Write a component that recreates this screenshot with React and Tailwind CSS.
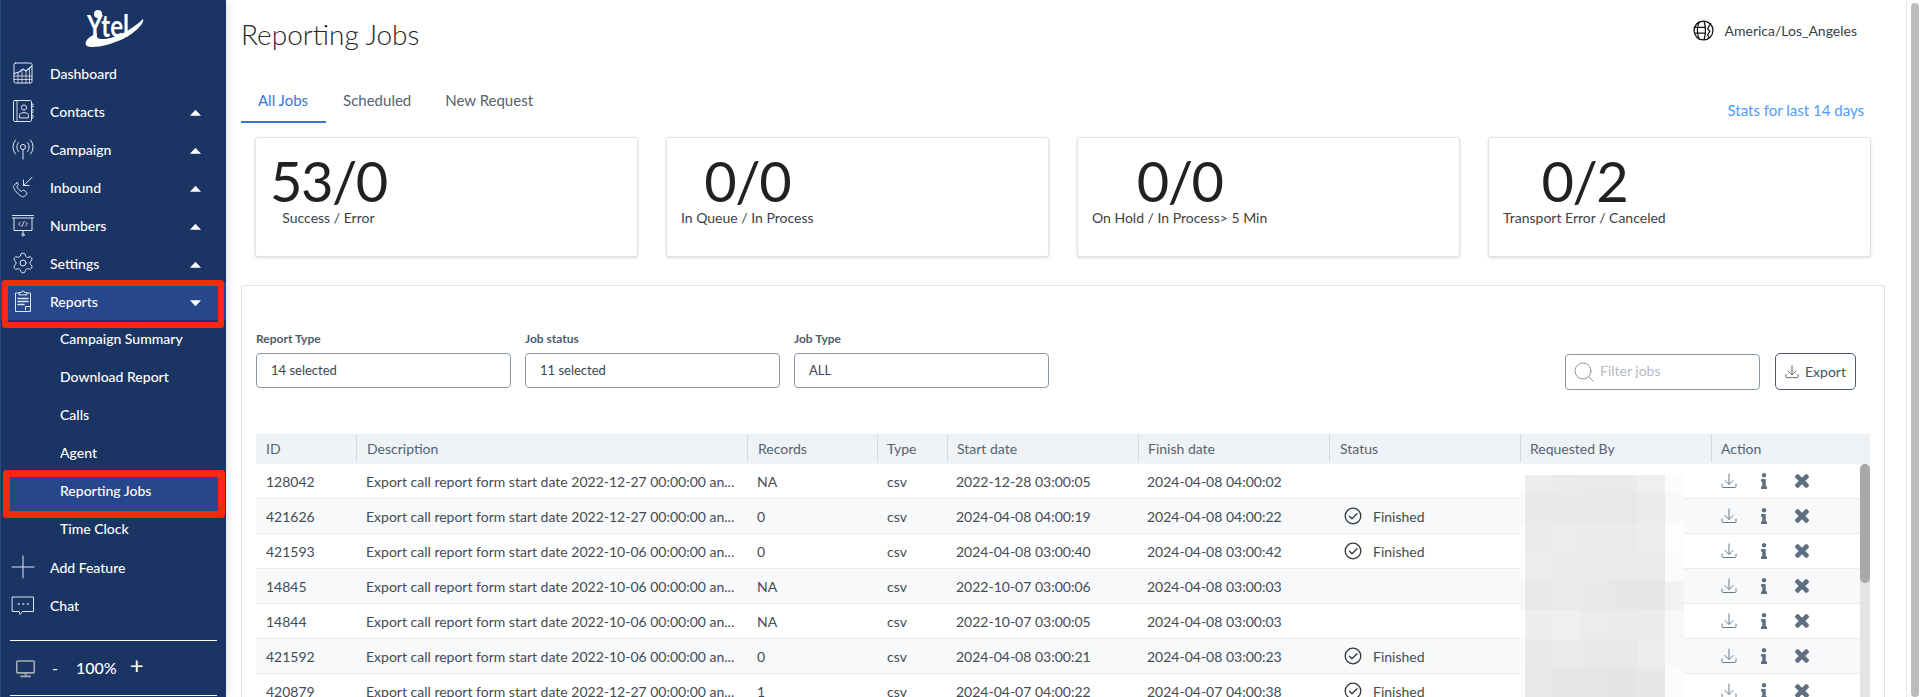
import React from "react";
import { Search, Settings } from "lucide-react";
import { FaInfo, FaTimes } from "react-icons/fa";

const Line = ({ children, className = "" }) => (
  <svg
    viewBox="0 0 24 24"
    fill="none"
    stroke="currentColor"
    strokeWidth="1"
    strokeLinecap="round"
    strokeLinejoin="round"
    className={"w-[24px] h-[24px] text-[#dfe5ee] " + className}
  >
    {children}
  </svg>
);

const DashIcon = () => (
  <Line>
    <rect x="3" y="2" width="18" height="20" rx="1.5" />
    <path d="M3 12.5 8 11l4-3 3 2 6-5" strokeWidth="1.2" />
    <path d="M3 15h18M3 18.5h18M7 11.5V22M11 9v13M15 10v12M18.5 7.5V22" strokeWidth=".8" />
  </Line>
);
const ContactsIcon = () => (
  <Line>
    <rect x="2.5" y="1.5" width="18" height="21" rx="1.2" />
    <path d="M6 1.5v21M20.5 5h1.5v3h-1.5M20.5 10.5H22v3h-1.5M20.5 16H22v3h-1.5" strokeWidth=".9" />
    <circle cx="13" cy="8.5" r="2.6" />
    <path d="M8.5 18.5v-2.2c0-1.5 1.6-2.6 4.5-2.6s4.500 1.100 4.500 2.600v2.200z" />
  </Line>
);
const CampaignIcon = () => (
  <Line>
    <circle cx="12" cy="10" r="2.6" />
    <path d="M12 12.600V22" />
    <path d="M7.500 5.500a6.500 6.500 0 0 0 0 9M16.500 5.500a6.500 6.500 0 0 1 0 9M4.500 3a10.500 10.500 0 0 0 0 14M19.500 3a10.500 10.500 0 0 1 0 14" />
  </Line>
);
const InboundIcon = () => (
  <Line>
    <path d="M5.500 8 3 10.500c-.8.800-.7 1.800-.2 2.700 2 3.600 4.500 6.200 8 8.300.9.500 2 .5 2.700-.2l2.200-2.200c.4-.4.400-1 0-1.400l-2.600-2.400c-.4-.4-1-.4-1.400 0l-1.200 1.200c-2.200-1.200-3.600-2.800-4.800-5l1.300-1.200c.4-.4.400-1 0-1.400L7 8c-.4-.4-1-.4-1.500 0z" />
    <path d="M21 2.500 12.500 10.500M12.500 5v5.500H18" />
  </Line>
);
const NumbersIcon = () => (
  <Line>
    <path d="M1.500 2.500h21M1.500 5h21M3 5v12.500h18V5M12 17.500v3" />
    <circle cx="12" cy="21.800" r="1.200" />
    <path d="m9.500 9-2 2 2 2M14.500 9l2 2-2 2M13 8.500l-2 5" strokeWidth=".9" />
  </Line>
);
const ReportsIcon = () => (
  <Line>
    <path d="M8 4H4.500v18.500h15V4H16" />
    <path d="M8 5.500V3.500h2.500a1.500 1.500 0 0 1 3 0H16v2z" />
    <path d="M7 9.500h10M7 12.500h10M7 15.500h6" strokeWidth="1.500" />
    <path d="M14.500 21v-3.500H19" />
  </Line>
);
const ChatIcon = () => (
  <Line>
    <path d="M1.500 4h21v14.500H11.500L9 21.500l-.8-3H1.500z" />
    <path d="M7.500 11h.6M12 11h.6M16.500 11h.6" strokeWidth="1.600" />
  </Line>
);
const PlusIcon = () => (
  <Line>
    <path d="M1 12h22M12 1v22" />
  </Line>
);
const MonitorIcon = () => (
  <svg viewBox="0 0 24 24" className="w-[21px] h-[21px] text-[#a6acb5]" fill="none" stroke="currentColor" strokeWidth="1.800">
    <rect x="2" y="3.500" width="20" height="13.500" rx="1" />
    <path d="M12 17v3.500M6 21h12" />
  </svg>
);

const Caret = ({ down }) => (
  <svg viewBox="0 0 11 6" className="w-[11px] h-[6px] mr-[25px] mt-[3px] text-white" fill="currentColor">
    {down ? <path d="M0 .3h11L6 5.700a.7.7 0 0 1-1 0z" /> : <path d="M0 5.700h11L6 .3a.7.7 0 0 0-1 0z" />}
  </svg>
);

const NAV_TOP = [
  { label: "Dashboard", icon: DashIcon },
  { label: "Contacts", icon: ContactsIcon, caret: true },
  { label: "Campaign", icon: CampaignIcon, caret: true },
  { label: "Inbound", icon: InboundIcon, caret: true },
  { label: "Numbers", icon: NumbersIcon, caret: true },
  { label: "Settings", icon: () => <Settings size={24} strokeWidth={1} className="text-[#dfe5ee]" />, caret: true },
];

const SUB_NAV = ["Campaign Summary", "Download Report", "Calls", "Agent", "Reporting Jobs", "Time Clock"];

const STATS = [
  { value: "53/0", label: "Success / Error" },
  { value: "0/0", label: "In Queue / In Process" },
  { value: "0/0", label: "On Hold / In Process> 5 Min" },
  { value: "0/2", label: "Transport Error / Canceled" },
];

const D1 = "Export call report form start date 2022-12-27 00:00:00 an...";
const D2 = "Export call report form start date 2022-10-06 00:00:00 an...";

const ROWS = [
  { id: "128042", desc: D1, rec: "NA", start: "2022-12-28 03:00:05", end: "2024-04-08 04:00:02", done: false },
  { id: "421626", desc: D1, rec: "0", start: "2024-04-08 04:00:19", end: "2024-04-08 04:00:22", done: true },
  { id: "421593", desc: D2, rec: "0", start: "2024-04-08 03:00:40", end: "2024-04-08 03:00:42", done: true },
  { id: "14845", desc: D2, rec: "NA", start: "2022-10-07 03:00:06", end: "2024-04-08 03:00:03", done: false },
  { id: "14844", desc: D2, rec: "NA", start: "2022-10-07 03:00:05", end: "2024-04-08 03:00:03", done: false },
  { id: "421592", desc: D2, rec: "0", start: "2024-04-08 03:00:21", end: "2024-04-08 03:00:23", done: true },
  { id: "420879", desc: D1, rec: "1", start: "2024-04-07 04:00:22", end: "2024-04-07 04:00:38", done: true },
];

const HEADERS = ["ID", "Description", "Records", "Type", "Start date", "Finish date", "Status", "Requested By", "Action"];

// pixelated name column, one colour per block
const BLUR = [
  { h: 18, c: ["#ffffff", "#eceeec", "#ebebeb", "#e9eaea", "#e9eaea", "#eef0ee", "#fcfcfc"] },
  { h: 30, c: ["#f8f9fb", "#e7e9eb", "#e8e9eb", "#e7e8e8", "#e7e8ea", "#e9ebed", "#f8f9fb"] },
  { h: 29, c: ["#fdfdfd", "#eaebea", "#ebedec", "#eaecea", "#eaecea", "#ebeeec", "#fdfdfd"] },
  { h: 29, c: ["#fbfbfb", "#ececec", "#ebebeb", "#eaeceb", "#e9eaea", "#ebebeb", "#fbfbfb"] },
  { h: 29, c: ["#f7f8fa", "#e8e9eb", "#e9eaec", "#e7e9eb", "#e5e7e9", "#e5e6e8", "#f1f2f3"] },
  { h: 29, c: ["#ffffff", "#eeeeee", "#eef0ee", "#ececec", "#ebebeb", "#ebebeb", "#f8f8f8"] },
  { h: 29, c: ["#f8f9fb", "#e8e9eb", "#e8eaec", "#e7e9eb", "#e6e8ea", "#ebedef", "#f8f9fb"] },
  { h: 29, c: ["#fcfcfc", "#e8eae9", "#e5e5e5", "#e5e5e5", "#e4e4e4", "#e7e7e7", "#fcfcfc"] },
];
const BLUR_W = [5, 28, 28, 28, 28, 28, 19];

const DownloadIcon = ({ className = "" }) => (
  <svg viewBox="0 0 16 16" fill="none" stroke="currentColor" strokeWidth="1" strokeLinecap="round" strokeLinejoin="round" className={className}>
    <path d="M8 1v10M4 7.500 8 11.500l4-4M1 11v2.500c0 .6.500 1 1 1h12c.5 0 1-.4 1-1V11" />
  </svg>
);

const CheckCircle = () => (
  <svg viewBox="0 0 18 18" fill="none" stroke="#33383d" strokeWidth="1.300" strokeLinecap="round" strokeLinejoin="round" className="w-[18px] h-[18px]">
    <circle cx="9" cy="9" r="7.800" />
    <path d="m5.500 9.200 2.500 2.500 5-5" />
  </svg>
);

const GlobeIcon = () => (
  <svg viewBox="0 0 20 20" fill="none" stroke="#111" strokeWidth="1.200" className="w-[21px] h-[21px]">
    <circle cx="10" cy="10" r="9" />
    <path d="M1.500 7h11M1.500 12.500h11M6 1.500c-2.200 5-2.200 12 0 17M10.500 1c1.500 5 1.500 13 0 18M17 3l-3 5 2 3-2 3 1 3" />
  </svg>
);

const SideRow = ({ item, active }) => {
  const Icon = item.icon;
  return (
    <div className={"relative flex items-center h-[38px] pl-[10px] " + (active ? "bg-[#27478c]" : "")}>
      <div className="w-[24px] flex justify-center mr-[15px]">
        <Icon />
      </div>
      <span className="flex-1 text-white text-[14px] font-medium">{item.label}</span>
      {item.caret && <Caret down={active} />}
      {active && <div className="absolute left-[1px] top-[-2px] w-[222px] h-[48px] border-[6px] border-[#f42a0c] rounded-[3px]" />}
    </div>
  );
};

const SelectBox = ({ label, value }) => (
  <div className="w-[255px]">
    <div className="text-[12px] leading-4 font-bold text-[#4c5c6c]">{label}</div>
    <div className="mt-[6px] h-[35px] flex items-center px-[14px] border border-[#8b99a7] rounded-[4px] text-[13px] text-[#3d4650]">
      {value}
    </div>
  </div>
);

const App = () => {
  return (
    <div className="flex h-screen overflow-hidden bg-white font-[Lato,sans-serif]">
      {/* Sidebar */}
      <aside className="relative z-10 w-[226px] shrink-0 flex flex-col bg-[#1a3464] border-l border-[#2a4a7c] shadow-[2px_0_8px_rgba(0,0,0,0.12)]">
        <div className="h-[54px] shrink-0 pl-[84px] pt-[9px]">
          <svg viewBox="0 0 60 38" className="w-[60px] h-[38px] overflow-visible">
            <circle cx="13" cy="5" r="4" fill="#fff" />
            <text x="2" y="28" fill="#fff" fontFamily="Lato" fontWeight="700" fontSize="30" textLength="42" lengthAdjust="spacingAndGlyphs">Ytel</text>
            <path d="M1 36C-1 31 6 27 12 24 11 28 12 30 18 30 30 30 48 20 58 10 60 14 50 24 38 30 25 36 4 41 1 36z" fill="#fff" />
          </svg>
        </div>
        {NAV_TOP.map((item) => (
          <SideRow key={item.label} item={item} />
        ))}
        <SideRow item={{ label: "Reports", icon: ReportsIcon, caret: true }} active />
        <div className="flex flex-col -mt-px">
          {SUB_NAV.map((label) =>
            label === "Reporting Jobs" ? (
              <div key={label} className="relative h-[38px] flex items-center pl-[59px] text-white text-[14px] font-medium">
                <div className="absolute left-[2px] top-[-1px] w-[222px] h-[48px] bg-[#27478c] border-[7px] border-[#f42a0c] rounded-[3px]" />
                <span className="relative">{label}</span>
              </div>
            ) : (
              <div key={label} className="h-[38px] flex items-center pl-[59px] text-white text-[14px] font-medium">
                {label}
              </div>
            )
          )}
        </div>
        <div className="mt-px">
          <SideRow item={{ label: "Add Feature", icon: PlusIcon }} />
          <SideRow item={{ label: "Chat", icon: ChatIcon }} />
        </div>
        <div className="mt-[16px] mx-[9px] border-t border-white" />
        <div className="h-[54px] flex items-center pl-[14px] text-white">
          <MonitorIcon />
          <span className="ml-[16px] text-[16px]">-</span>
          <span className="ml-[18px] text-[16px] font-medium">100%</span>
          <span className="ml-[13px] text-[24px] leading-none -mt-[7px]">+</span>
        </div>
        <div className="mx-[9px] border-t border-white" />
      </aside>

      {/* Main */}
      <main className="flex-1 min-w-0 flex flex-col pl-[15px] pr-[21px]">
        <div className="h-[72px] shrink-0 flex justify-between">
          <h1 className="mt-[14px] text-[28px] leading-10 font-light text-[#24282c]">Reporting Jobs</h1>
          <div className="flex items-center gap-[11px] h-[20px] mt-[20px] mr-[28px] text-[14px] text-[#3a3f45]">
            <GlobeIcon />
            <span>America/Los_Angeles</span>
          </div>
        </div>

        <div className="h-[51px] shrink-0 flex justify-between">
          <div className="flex text-[15px] leading-5">
            <div className="pl-[17px] pr-[18px] pt-[18px] pb-[11px] text-[#3b74d6] border-b-2 border-[#3b74d6]">All Jobs</div>
            <div className="px-[17px] pt-[18px] text-[#55626f]">Scheduled</div>
            <div className="pl-[17px] pt-[18px] text-[#55626f]">New Request</div>
          </div>
          <div className="mt-[28px] mr-[21px] text-[15px] leading-5 text-[#4a9eff]">Stats for last 14 days</div>
        </div>

        <div className="shrink-0 mt-[14px] px-[14px] grid grid-cols-4 gap-[28px]">
          {STATS.map((s) => (
            <div key={s.label} className="h-[120px] pl-[14px] pt-[14px] bg-white border border-[#e2e2e2] rounded-[3px] shadow-[0_1px_3px_rgba(0,0,0,0.14)]">
              <div className="inline-flex flex-col items-center text-[#3c4146]">
                <span className="text-[56px] leading-[58px] tracking-[-1.5px] text-[#1f2123]">{s.value}</span>
                <span className="text-[14px] leading-4">{s.label}</span>
              </div>
            </div>
          ))}
        </div>

        {/* Jobs panel */}
        <section className="flex-1 min-h-0 mt-[28px] flex flex-col overflow-hidden border border-b-0 border-[#e3e3e3] rounded-t-[3px] px-[14px] pt-[45px]">
          <div className="flex justify-between items-start shrink-0">
            <div className="flex gap-[14px]">
              <SelectBox label="Report Type" value="14 selected" />
              <SelectBox label="Job status" value="11 selected" />
              <SelectBox label="Job Type" value="ALL" />
            </div>
            <div className="flex gap-[15px] pt-[22px] mr-[14px]">
              <div className="w-[195px] h-[36px] flex items-center gap-[4px] px-[6px] mt-px border border-[#8b99a7] rounded-[4px] text-[14px] text-[#b5bcc4]">
                <Search size={24} strokeWidth={0.9} className="text-[#7f8c99]" />
                <span className="-mt-[3px]">Filter jobs</span>
              </div>
              <div className="w-[81px] h-[37px] flex items-center justify-center gap-[6px] border border-[#4a5a6a] rounded-[5px] text-[14px] text-[#47535f]">
                <DownloadIcon className="w-[14px] h-[14px]" />
                <span>Export</span>
              </div>
            </div>
          </div>

          <div className="mt-[44px] flex-1 min-h-0 flex flex-col overflow-hidden">
            <div className="shrink-0 h-[30px] pb-[2px] grid grid-cols-[100px_391px_130px_70px_191px_191px_191px_191px_159px] items-stretch bg-[#eff3f6] text-[14px] text-[#55626f]">
              {HEADERS.map((h, i) => (
                <div
                  key={h}
                  className={
                    "flex items-center " +
                    (i === 0 ? "pl-[10px]" : i < 3 || i === 6 ? "pl-[10px] border-l border-[#d3dae1]" : "pl-[9px] border-l border-[#d3dae1]")
                  }
                >
                  {h}
                </div>
              ))}
            </div>
            <div className="relative flex-1 min-h-0 overflow-hidden">
              {ROWS.map((r, i) => (
                <div
                  key={r.id}
                  className={
                    "grid grid-cols-[100px_391px_130px_70px_191px_191px_191px_191px_159px] items-center h-[35px] border-b border-[#e8edf2] text-[14px] text-[#454b52] " +
                    (i % 2 === 1 ? "bg-[#f7f9fb]" : "bg-white")
                  }
                >
                  <div className="pl-[10px]">{r.id}</div>
                  <div className="pl-[10px] whitespace-nowrap">{r.desc}</div>
                  <div className="pl-[10px]">{r.rec}</div>
                  <div className="pl-[10px]">csv</div>
                  <div className="pl-[9px]">{r.start}</div>
                  <div className="pl-[9px]">{r.end}</div>
                  <div className="pl-[15px] flex items-center gap-[11px]">
                    {r.done && <CheckCircle />}
                    {r.done && <span className="mt-px">Finished</span>}
                  </div>
                  <div />
                  <div className="pl-[10px] flex items-center text-[#5e6f80]">
                    <DownloadIcon className="w-[16px] h-[16px] text-[#6b7a88]" />
                    <FaInfo className="ml-[23px] w-[8px] h-[16px]" />
                    <FaTimes className="ml-[27px] w-[14px] h-[18px] [stroke-width:40]" />
                  </div>
                </div>
              ))}

              {/* blurred names */}
              <div className="absolute left-[1264px] top-[11px] flex flex-col">
                {BLUR.map((row, i) => (
                  <div key={i} className="flex" style={{ height: row.h }}>
                    {row.c.map((c, j) => (
                      <div key={j} style={{ width: BLUR_W[j], background: c }} />
                    ))}
                  </div>
                ))}
              </div>

              {/* list scrollbar */}
              <div className="absolute right-0 top-0 bottom-0 w-[10px] bg-[#e4e4e4] rounded-t-full">
                <div className="h-[119px] bg-[#a9a9a9] rounded-full" />
              </div>
            </div>
          </div>
        </section>
      </main>

      {/* Page scrollbar */}
      <div className="w-[14px] shrink-0 border-l border-[#e6e6e6] pl-[4px] pr-[1px] pt-[3px] bg-white">
        <div className="h-full bg-[#bcbcbc] rounded-full" />
      </div>
    </div>
  );
};

export default App;
